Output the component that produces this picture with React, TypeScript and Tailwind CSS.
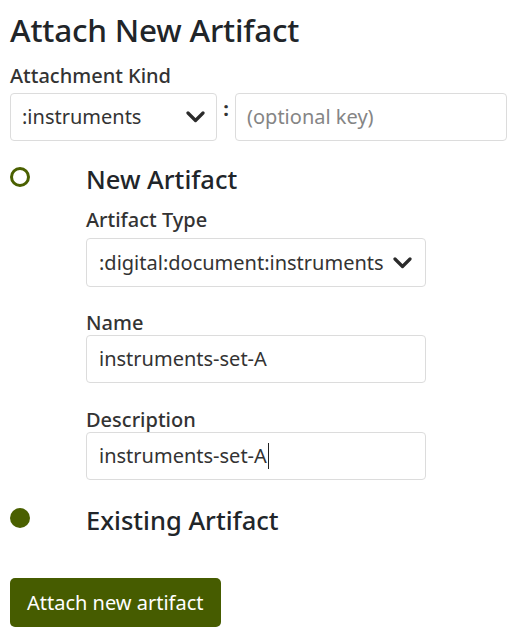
import React from "react";

function Chevron() {
  return (
    <svg width="19" height="12" viewBox="0 0 19 12" className="shrink-0">
      <path d="M2 2 L9.5 9.5 L17 2" fill="none" stroke="#2b2b2b" strokeWidth="3.2" strokeLinecap="round" strokeLinejoin="round" />
    </svg>
  );
}

export default function App() {
  return (
    <div className="min-h-[633px] bg-white px-[10px] pt-[8px] text-[#212529]" style={{ fontFamily: '"Noto Sans", "Open Sans", sans-serif' }}>
      <h3 className="text-[31.5px] leading-[44px] font-medium tracking-[-0.2px]">Attach New Artifact</h3>
      <div className="mt-[12px] text-[20px] leading-[24px] font-medium text-[#333]">Attachment Kind</div>
      <div className="mt-[5px] flex items-stretch">
        <div className="flex h-[48px] w-[207px] items-center justify-between rounded-[4px] border border-[#dcdcdc] pl-[11px] pr-[11px] text-[20px] text-[#333]">
          <span>:instruments</span>
          <Chevron />
        </div>
        <div className="flex w-[18px] justify-center pt-[4px] text-[20px] leading-[24px] font-bold text-[#333]">:</div>
        <div className="flex h-[48px] flex-1 items-center rounded-[4px] border border-[#dcdcdc] pl-[11px] text-[20px] text-[#858585]">
          (optional key)
        </div>
      </div>

      <div className="mt-[23px] flex items-start">
        <div className="mt-[3px] h-[20px] w-[20px] shrink-0 rounded-full border-[3px] border-[#4a6000]" />
        <div className="ml-[56px] w-[340px]">
          <div className="text-[25.5px] leading-[30px] font-medium">New Artifact</div>
          <div className="mt-[14px] text-[20px] leading-[24px] font-medium text-[#333]">Artifact Type</div>
          <div className="mt-[6px] flex h-[49px] items-center justify-between rounded-[4px] border border-[#dcdcdc] pl-[12px] pr-[13px] text-[20px] text-[#333]">
            <span>:digital:document:instruments</span>
            <Chevron />
          </div>
          <div className="mt-[24px] text-[20px] leading-[24px] font-medium text-[#333]">Name</div>
          <div className="mt-[0px] flex h-[48px] items-center rounded-[4px] border border-[#dcdcdc] pl-[12px] text-[20px] text-[#333]">
            instruments-set-A
          </div>
          <div className="mt-[25px] text-[20px] leading-[24px] font-medium text-[#333]">Description</div>
          <div className="mt-[0px] flex h-[48px] items-center rounded-[4px] border border-[#dcdcdc] pl-[12px] text-[20px] text-[#333]">
            <span>instruments-set-A</span>
            <span className="ml-[1px] inline-block h-[26px] w-[1px] bg-[#222]" />
          </div>
        </div>
      </div>

      <div className="mt-[25px] flex items-start">
        <div className="mt-[3px] h-[20px] w-[20px] shrink-0 rounded-full bg-[#4a6000]" />
        <div className="ml-[56px] text-[25.5px] leading-[30px] font-medium">Existing Artifact</div>
      </div>

      <button className="mt-[43px] flex h-[49px] items-center rounded-[5px] bg-[#465c00] px-[17px] text-[20px] text-white">
        Attach new artifact
      </button>
    </div>
  );
}
